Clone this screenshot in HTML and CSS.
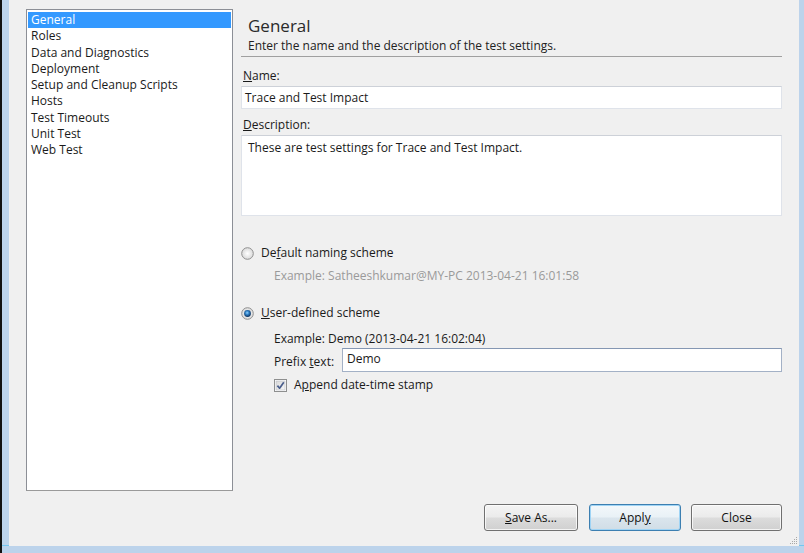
FILE: index.html
```html
<!DOCTYPE html>
<html>
<head>
<meta charset="utf-8">
<link rel="stylesheet" href="styles.css">
</head>
<body>
<div class="screen">
  <div class="window">
    <div class="dialog">
      <div class="main">
        <ul class="list">
          <li class="sel">General</li>
          <li>Roles</li>
          <li>Data and Diagnostics</li>
          <li>Deployment</li>
          <li>Setup and Cleanup Scripts</li>
          <li>Hosts</li>
          <li>Test Timeouts</li>
          <li>Unit Test</li>
          <li>Web Test</li>
        </ul>
        <div class="panel">
          <div class="title">General</div>
          <div class="subtitle">Enter the name and the description of the test settings.</div>
          <div class="sep"></div>
          <div class="label lbl-name"><u>N</u>ame:</div>
          <div class="textbox name-box">Trace and Test Impact</div>
          <div class="label lbl-desc"><u>D</u>escription:</div>
          <div class="textbox desc-box">These are test settings for Trace and Test Impact.</div>

          <div class="radio-row r1">
            <svg class="radio" width="13" height="13" viewBox="0 0 13 13">
              <defs>
                <radialGradient id="rg1" cx="0.5" cy="0.5" r="0.6">
                  <stop offset="0" stop-color="#ffffff"/>
                  <stop offset="1" stop-color="#d2d2d2"/>
                </radialGradient>
              </defs>
              <circle cx="6.5" cy="6.5" r="5.8" fill="url(#rg1)" stroke="#909090" stroke-width="1"/>
              <circle cx="6.5" cy="6.5" r="4.2" fill="none" stroke="#e6e6e6" stroke-width="1"/>
            </svg>
            <span>De<u>f</u>ault naming scheme</span>
          </div>
          <div class="example disabled ex1">Example: Satheeshkumar@MY-PC 2013-04-21 16:01:58</div>

          <div class="radio-row r2">
            <svg class="radio" width="13" height="13" viewBox="0 0 13 13">
              <defs>
                <radialGradient id="rg2" cx="0.5" cy="0.5" r="0.6">
                  <stop offset="0" stop-color="#ffffff"/>
                  <stop offset="1" stop-color="#d2d2d2"/>
                </radialGradient>
                <radialGradient id="dot" cx="0.45" cy="0.4" r="0.6">
                  <stop offset="0" stop-color="#8fd2ff"/>
                  <stop offset="0.45" stop-color="#2f7fc4"/>
                  <stop offset="1" stop-color="#0c2f5a"/>
                </radialGradient>
              </defs>
              <circle cx="6.5" cy="6.5" r="5.8" fill="url(#rg2)" stroke="#909090" stroke-width="1"/>
              <circle cx="6.5" cy="6.5" r="3.4" fill="url(#dot)"/>
            </svg>
            <span><u>U</u>ser-defined scheme</span>
          </div>
          <div class="example ex2">Example: Demo (2013-04-21 16:02:04)</div>
          <div class="prefix-row">
            <span class="prefix-label">Prefix <u>t</u>ext:</span>
            <div class="textbox prefix-box">Demo</div>
          </div>
          <div class="check-row">
            <svg class="check" width="13" height="13" viewBox="0 0 13 13">
              <defs>
                <linearGradient id="cg" x1="0" y1="0" x2="1" y2="1">
                  <stop offset="0" stop-color="#d8d8d8"/>
                  <stop offset="1" stop-color="#f8f8f8"/>
                </linearGradient>
              </defs>
              <rect x="0.5" y="0.5" width="12" height="12" fill="#ffffff" stroke="#8e8f8f"/>
              <rect x="2" y="2" width="9" height="9" fill="url(#cg)" stroke="#b8bcc4" stroke-width="0.6"/>
              <path d="M3.4 6.6 L5.6 9.2 L9.8 3.2" fill="none" stroke="#4a5e8c" stroke-width="1.7" stroke-linejoin="round"/>
            </svg>
            <span>A<u>p</u>pend date-time stamp</span>
          </div>
        </div>
      </div>
      <div class="buttons">
        <div class="btn btn-save"><u>S</u>ave As...</div>
        <div class="btn btn-apply">Appl<u>y</u></div>
        <div class="btn btn-close">Close</div>
      </div>
      <div class="grip">
        <svg width="10" height="10" viewBox="0 0 10 10">
          <g fill="#a8a8a8">
            <rect x="8" y="2" width="1" height="1"/>
            <rect x="6" y="4" width="1" height="1"/><rect x="8" y="4" width="1" height="1"/>
            <rect x="4" y="6" width="1" height="1"/><rect x="6" y="6" width="1" height="1"/><rect x="8" y="6" width="1" height="1"/>
            <rect x="2" y="8" width="1" height="1"/><rect x="4" y="8" width="1" height="1"/><rect x="6" y="8" width="1" height="1"/><rect x="8" y="8" width="1" height="1"/>
          </g>
        </svg>
      </div>
    </div>
  </div>
</div>
</body>
</html>
```
FILE: styles.css
```css
* { box-sizing: border-box; }
html, body { margin: 0; padding: 0; }
body {
  width: 804px;
  height: 553px;
  overflow: hidden;
  font-family: "Open Sans", "Noto Sans", sans-serif;
  font-size: 12px;
  color: #1a1a1a;
}
.screen {
  width: 804px;
  height: 553px;
  background: #111;
  padding-left: 2px;
  display: flex;
}
.window {
  flex: 1;
  display: flex;
  padding: 0 5px 7px 7px;
  background: linear-gradient(to bottom, #bcd3eb 0, #bcd3eb 545px, #74c6ef 545px, #74c6ef 546px, #bcd3eb 546px);
}
.dialog {
  flex: 1;
  position: relative;
  background: #f0f0f0;
  padding: 9px 17px 15px 17px;
  display: flex;
  flex-direction: column;
}
.main {
  flex: 1;
  display: flex;
  gap: 8px;
  min-height: 0;
}
.list {
  width: 207px;
  margin: 0;
  padding: 2px 1px 1px 1px;
  list-style: none;
  background: #fff;
  border: 1px solid #8c8f96;
  border-bottom-color: #9a9a9a;
}
.list li {
  height: 16.3px;
  line-height: 16.3px;
  padding-left: 3px;
  white-space: nowrap;
}
.list li.sel {
  background: #3399ff;
  color: #fff;
}
.panel {
  flex: 1;
  display: flex;
  flex-direction: column;
}
.title {
  margin-top: 5px;
  padding-left: 7px;
  height: 24px;
  line-height: 24px;
  font-size: 17px;
  color: #2a2a2a;
}
.subtitle {
  padding-left: 7px;
  height: 16px;
  line-height: 16px;
  color: #222;
}
.sep {
  margin-top: 2px;
  height: 1px;
  background: #a0a0a0;
}
.label {
  height: 16px;
  line-height: 16px;
  padding-left: 2px;
}
.lbl-name { margin-top: 11px; }
.lbl-desc { margin-top: 8px; }
.textbox {
  background: #fff;
  border: 1px solid #dfe3ea;
  border-top-color: #cdd1d8;
}
.name-box {
  margin-top: 2px;
  height: 23px;
  line-height: 21px;
  padding-left: 3px;
}
.desc-box {
  margin-top: 2px;
  height: 81px;
  line-height: 16px;
  padding: 4px 6px;
}
.radio-row {
  display: flex;
  align-items: center;
  height: 16px;
  line-height: 16px;
}
.radio { margin-left: 0; margin-right: 7px; flex: none; }
.r1 { margin-top: 29px; }
.r2 { margin-top: 21px; }
.example {
  height: 16px;
  line-height: 16px;
  padding-left: 33px;
}
.disabled { color: #9a9a9a; }
.ex1 { margin-top: 7px; }
.ex2 { margin-top: 10px; }
.prefix-row {
  margin-top: 1px;
  display: flex;
  align-items: center;
  padding-left: 33px;
}
.prefix-label {
  width: 68px;
  padding-top: 3px;
  flex: none;
}
.prefix-box {
  flex: 1;
  height: 24px;
  line-height: 20px;
  padding-left: 4px;
  border-color: #a3b1c6;
  border-top-color: #8597b3;
}
.check-row {
  margin-top: 5px;
  padding-left: 33px;
  display: flex;
  align-items: center;
  height: 16px;
  line-height: 16px;
}
.check { margin-right: 7px; flex: none; }
.buttons {
  margin-top: 13px;
  display: flex;
  justify-content: flex-end;
  gap: 10px;
}
.btn {
  height: 27px;
  line-height: 25px;
  text-align: center;
  border: 1px solid #707070;
  border-radius: 3px;
  background: linear-gradient(to bottom, #f4f4f4 0%, #ebebeb 48%, #dcdcdc 52%, #d0d0d0 100%);
  box-shadow: inset 0 0 0 1px rgba(255,255,255,0.75);
  color: #111;
}
.btn-save { width: 94px; margin-right: 1px; }
.btn-apply {
  width: 92px;
  border-color: #3c7fb1;
  background: linear-gradient(to bottom, #f3f8fb 0%, #e9f1f6 48%, #dae5ed 52%, #d0dde6 100%);
  box-shadow: inset 0 0 0 1px #9fd4f5;
}
.btn-close { width: 91px; }
.grip {
  position: absolute;
  right: 1px;
  bottom: 1px;
  width: 10px;
  height: 10px;
}
.grip svg { display: block; }
u { text-decoration: underline; text-underline-offset: 1px; }
```
